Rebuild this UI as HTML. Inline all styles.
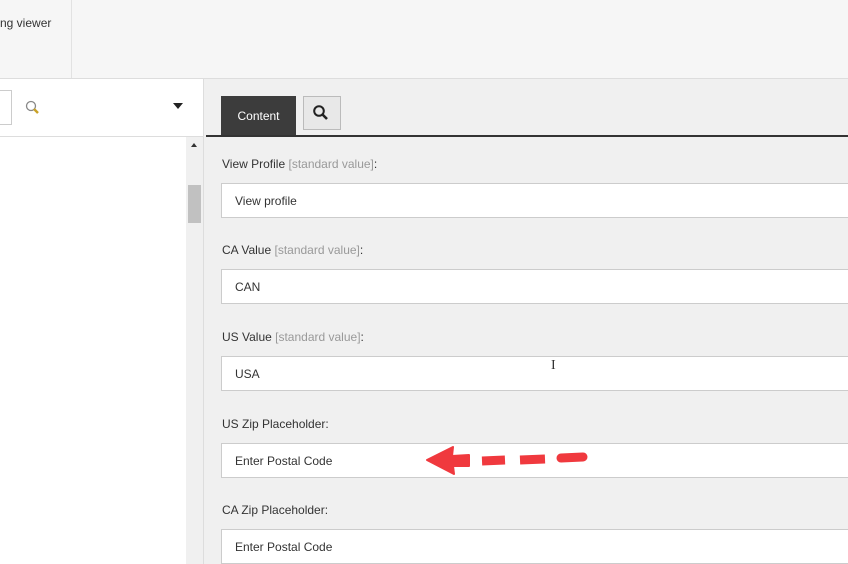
<!DOCTYPE html>
<html><head><style>
body{margin:0;width:848px;height:564px;overflow:hidden;background:#f0f0f0;font-family:"Liberation Sans",sans-serif;position:relative}
div{position:absolute;box-sizing:border-box}
.lbl{left:222px;font-size:12px;color:#333}
.lbl span{color:#999}
.inp{left:221px;width:640px;height:35px;background:#fff;border:1px solid #ccc;font-size:12px;color:#333;padding:10px 0 0 13px}
</style></head><body>
<div style="left:0;top:0;width:848px;height:79px;background:#f6f6f6;border-bottom:1px solid #ddd"></div>
<div style="left:71px;top:0;width:1px;height:78px;background:#e2e2e2"></div>
<div style="left:0;top:16px;font-size:12px;color:#333">ng viewer</div>
<div style="left:0;top:79px;width:204px;height:485px;background:#fff;border-right:1px solid #ddd"></div>
<div style="left:0;top:136px;width:204px;height:1px;background:#ddd"></div>
<div style="left:0;top:90px;width:12px;height:35px;border:1px solid #ccc;border-left:none"></div>
<svg style="position:absolute;left:24px;top:99px" width="18" height="18"><circle cx="7" cy="7" r="4.5" fill="none" stroke="#888" stroke-width="1.3"/><line x1="10" y1="10" x2="14" y2="14" stroke="#c9a227" stroke-width="2.5"/></svg>
<div style="left:173px;top:103px;width:0;height:0;border-left:5px solid transparent;border-right:5px solid transparent;border-top:6px solid #222"></div>
<div style="left:186px;top:137px;width:17px;height:427px;background:#f0f0f0"></div>
<div style="left:191px;top:143px;width:0;height:0;border-left:3.5px solid transparent;border-right:3.5px solid transparent;border-bottom:4px solid #333"></div>
<div style="left:188px;top:185px;width:13px;height:38px;background:#c1c1c1"></div>
<div style="left:221px;top:96px;width:75px;height:40px;background:#3c3c3c;color:#fff;font-size:12px;text-align:center;padding-top:13px">Content</div>
<div style="left:303px;top:96px;width:38px;height:34px;background:#e8e8e8;border:1px solid #bbb"></div>
<svg style="position:absolute;left:312px;top:104px" width="18" height="18"><circle cx="7" cy="7" r="4.8" fill="none" stroke="#222" stroke-width="2"/><line x1="10.5" y1="10.5" x2="15" y2="15" stroke="#222" stroke-width="2.6"/></svg>
<div style="left:206px;top:135px;width:642px;height:2px;background:#333"></div>
<div class="lbl" style="top:157px">View Profile <span>[standard value]</span>:</div>
<div class="inp" style="top:183px">View profile</div>
<div class="lbl" style="top:243px">CA Value <span>[standard value]</span>:</div>
<div class="inp" style="top:269px">CAN</div>
<div class="lbl" style="top:330px">US Value <span>[standard value]</span>:</div>
<div class="inp" style="top:356px">USA</div>
<div class="lbl" style="top:417px">US Zip Placeholder:</div>
<div class="inp" style="top:443px">Enter Postal Code</div>
<div class="lbl" style="top:503px">CA Zip Placeholder:</div>
<div class="inp" style="top:529px">Enter Postal Code</div>
<div style="left:551px;top:358px;font-size:14px;color:#333;font-family:'Liberation Serif',serif">I</div>
<svg style="position:absolute;left:420px;top:440px" width="180" height="40"><g fill="#f0393e" stroke="#f0393e" stroke-linecap="round"><polygon points="7,20 33,7 32,16 49,15 49,26 33,26 34,34" stroke-width="2" stroke-linejoin="round"/><line x1="62" y1="21" x2="85" y2="20" stroke-width="9" stroke-linecap="butt"/><line x1="100" y1="20" x2="125" y2="19" stroke-width="9" stroke-linecap="butt"/><line x1="141" y1="18" x2="163" y2="17" stroke-width="9"/></g></svg>
</body></html>
